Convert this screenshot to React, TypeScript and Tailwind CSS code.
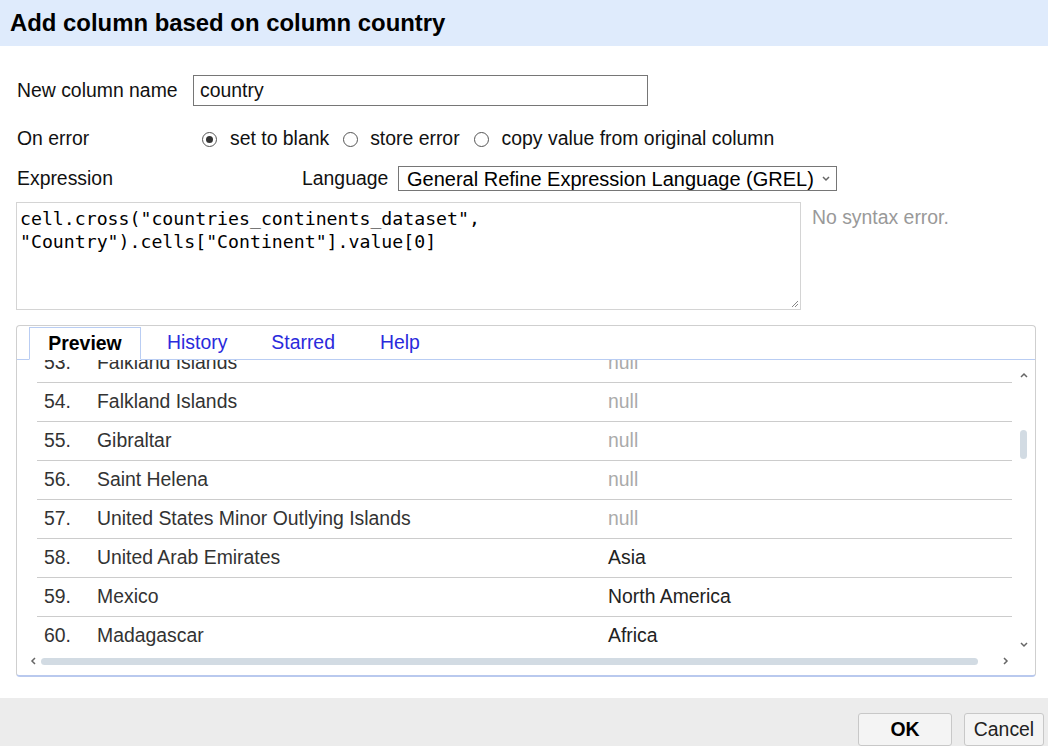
import React from 'react';

const rows = [
  { n: 53, name: 'Falkland Islands', value: 'null' },
  { n: 54, name: 'Falkland Islands', value: 'null' },
  { n: 55, name: 'Gibraltar', value: 'null' },
  { n: 56, name: 'Saint Helena', value: 'null' },
  { n: 57, name: 'United States Minor Outlying Islands', value: 'null' },
  { n: 58, name: 'United Arab Emirates', value: 'Asia' },
  { n: 59, name: 'Mexico', value: 'North America' },
  { n: 60, name: 'Madagascar', value: 'Africa' },
];

function Radio({ checked }: { checked?: boolean }) {
  return (
    <span className="w-[15px] h-[15px] rounded-full border border-[#555] bg-white flex items-center justify-center shrink-0">
      {checked && <span className="w-[7px] h-[7px] rounded-full bg-[#333]" />}
    </span>
  );
}

function Chevron({ dir, className }: { dir: 'up' | 'down' | 'left' | 'right'; className?: string }) {
  const d = {
    up: 'M1 5 L4 2 L7 5',
    down: 'M1 2 L4 5 L7 2',
    left: 'M5 1 L2 4 L5 7',
    right: 'M2 1 L5 4 L2 7',
  }[dir];
  return (
    <svg width="8" height="8" viewBox="0 0 8 8" className={className}>
      <path d={d} fill="none" stroke="#666" strokeWidth="1.5" />
    </svg>
  );
}

export default function App() {
  return (
    <div className="w-[1048px] h-[746px] bg-white overflow-hidden font-['Liberation_Sans',Arial,sans-serif] text-[19.4px] text-[#111]">
      {/* Title bar */}
      <div className="h-[46px] bg-[#dfebfc] flex items-center px-[10px]">
        <h1 className="text-[23.9px] font-bold text-black">Add column based on column country</h1>
      </div>

      <div className="px-[17px]">
        {/* New column name */}
        <div className="mt-[29px] h-[31px] flex items-center">
          <span className="w-[176px]">New column name</span>
          <div className="w-[455px] h-[31px] border border-[#767676] flex items-center px-[6px]">country</div>
        </div>

        {/* On error */}
        <div className="mt-[21px] h-[24px] flex items-center">
          <span className="w-[185px]">On error</span>
          <div className="flex items-center">
            <Radio checked />
            <span className="ml-[13px]">set to blank</span>
            <span className="ml-[14px]"><Radio /></span>
            <span className="ml-[12px]">store error</span>
            <span className="ml-[14px]"><Radio /></span>
            <span className="ml-[13px]">copy value from original column</span>
          </div>
        </div>

        {/* Expression / language */}
        <div className="mt-[15px] h-[25px] flex items-center">
          <span className="w-[285px]">Expression</span>
          <span className="w-[96px]">Language</span>
          <div className="w-[439px] h-[25px] border border-[#767676] flex items-center justify-between pl-[8px] pr-[6px] text-[20px] text-black">
            <span>General Refine Expression Language (GREL)</span>
            <Chevron dir="down" />
          </div>
        </div>

        {/* Expression editor */}
        <div className="mt-[11px] flex">
          <div className="-ml-[1px] w-[785px] h-[108px] border border-[#d4d4d4] relative px-[3px] py-[4px] font-['DejaVu_Sans_Mono',monospace] text-[18.2px] leading-[23px] text-black">
            <div>cell.cross("countries_continents_dataset",</div>
            <div>"Country").cells["Continent"].value[0]</div>
            <svg width="8" height="8" viewBox="0 0 8 8" className="absolute right-[1px] bottom-[1px]">
              <path d="M7 1 L1 7 M7 4 L4 7" stroke="#888" strokeWidth="1" />
            </svg>
          </div>
          <div className="ml-[11px] pt-[1px] text-[#999]">No syntax error.</div>
        </div>

        {/* Tabs panel */}
        <div className="mt-[15px] -ml-[1px] w-[1020px] h-[352px] border border-[#cfcfcf] border-b-[#b9c9ee] border-b-2 rounded-[4px] flex flex-col">
          <div className="h-[34px] flex items-end pl-[12px] border-b border-[#b9cdf3] shrink-0">
            <div className="w-[112px] h-[33px] -mb-[1px] bg-white border border-[#b9cdf3] border-b-white flex items-center justify-center font-bold text-black">
              Preview
            </div>
            <div className="h-[33px] flex items-center text-[#2a2adc]">
              <span className="ml-[26px]">History</span>
              <span className="ml-[44px]">Starred</span>
              <span className="ml-[45px]">Help</span>
            </div>
          </div>

          <div className="h-[291px] flex shrink-0">
            <div className="flex-1 overflow-hidden pl-[20px]">
              <div className="-mt-[16px]">
                {rows.map((r) => (
                  <div key={r.n} className="h-[39px] border-b border-[#cccccc] flex items-center text-[#333]">
                    <span className="w-[60px] pl-[7px]">{r.n}.</span>
                    <span className="w-[511px]">{r.name}</span>
                    <span className={r.value === 'null' ? 'text-[#aaa]' : 'text-[#222]'}>{r.value}</span>
                  </div>
                ))}
              </div>
            </div>
            <div className="w-[23px] flex flex-col items-center pt-[12px] pb-[2px]">
              <Chevron dir="up" />
              <div className="mt-[50px] w-[7px] h-[29px] rounded-full bg-[#d2dbe3]" />
              <div className="flex-1" />
              <Chevron dir="down" />
            </div>
          </div>

          <div className="h-[20px] flex items-center pl-[13px] pr-[25px]">
            <Chevron dir="left" />
            <div className="ml-[3px] w-[937px] h-[7px] rounded-full bg-[#d2dbe3]" />
            <div className="flex-1" />
            <Chevron dir="right" />
          </div>
        </div>
      </div>

      {/* Footer */}
      <div className="mt-[21px] h-[48px] bg-[#ececec] flex justify-end items-start pt-[15px] pr-[4px] gap-[12px]">
        <button className="w-[94px] h-[33px] bg-[#f4f4f4] border border-[#c8c8c8] rounded-[3px] font-bold text-black">OK</button>
        <button className="w-[80px] h-[33px] bg-[#f4f4f4] border border-[#c8c8c8] rounded-[3px] text-[#222]">Cancel</button>
      </div>
    </div>
  );
}
